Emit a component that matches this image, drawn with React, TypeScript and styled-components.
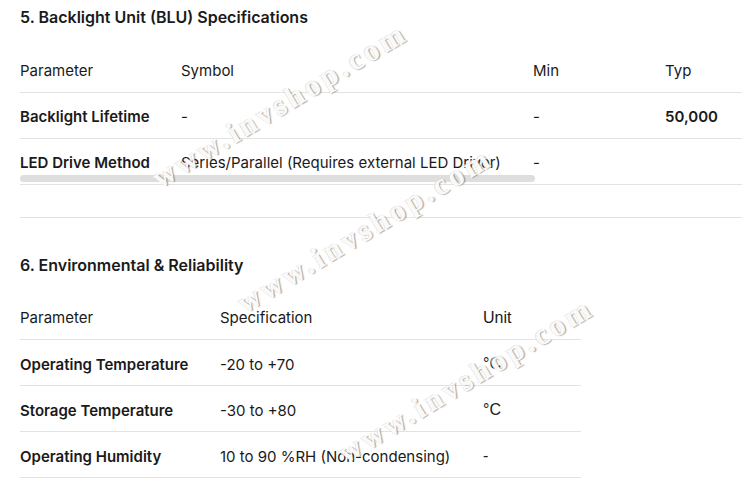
import React from "react";
import styled, { createGlobalStyle } from "styled-components";

const GlobalStyle = createGlobalStyle`
  html, body {
    margin: 0;
    padding: 0;
    background: #ffffff;
    overflow: hidden;
  }
  body {
    font-family: Inter, "Noto Sans", sans-serif;
    color: #1a1a1a;
    -webkit-font-smoothing: antialiased;
  }
`;

const Page = styled.div`
  position: relative;
  width: 742px;
  height: 488px;
  padding: 5px 0 0 20px;
  box-sizing: border-box;
  overflow: hidden;
`;

const Section = styled.section`
  display: flex;
  flex-direction: column;
`;

const Heading = styled.h3`
  margin: 0 0 17px;
  font-size: 16px;
  line-height: 24px;
  font-weight: 600;
  color: #1a1a1a;
`;

const TableWrap = styled.div`
  position: relative;
  width: 722px;
  overflow: hidden;
`;

const ScrollThumb = styled.div`
  position: absolute;
  left: 0;
  bottom: 3px;
  width: 515px;
  height: 7px;
  border-radius: 4px;
  background: #dedede;
`;

const Table = styled.table<{ $width: number }>`
  width: ${(p) => p.$width}px;
  border-collapse: collapse;
  table-layout: fixed;
  font-size: 15px;
`;

const Row = styled.tr`
  height: 46px;
  border-bottom: 1px solid #e3e3e3;
`;

const HeadCell = styled.th<{ $arial?: boolean }>`
  padding: 3px 0 0;
  text-align: left;
  font-weight: 400;
  vertical-align: middle;
  white-space: nowrap;
  font-family: ${(p) =>
    p.$arial ? '"Liberation Sans", Arial, sans-serif' : "Inter, sans-serif"};
  font-size: ${(p) => (p.$arial ? "16px" : "15px")};
`;

const Cell = styled.td<{ $bold?: boolean; $arial?: boolean }>`
  padding: 3px 0 0;
  vertical-align: middle;
  white-space: nowrap;
  font-weight: ${(p) => (p.$bold ? 600 : 400)};
  font-family: ${(p) =>
    p.$arial ? '"Liberation Sans", Arial, sans-serif' : "Inter, sans-serif"};
  font-size: ${(p) => (p.$arial ? "16px" : "15px")};
`;

const Divider = styled.hr`
  width: 722px;
  margin: 32px 0 35px;
  border: none;
  border-top: 1px solid #e3e3e3;
  height: 0;
`;

const Watermark = styled.span`
  position: absolute;
  transform: translate(-50%, -50%) rotate(-31deg);
  font-family: "Liberation Serif", "Times New Roman", serif;
  font-weight: 700;
  font-size: 30px;
  letter-spacing: 4px;
  white-space: nowrap;
  color: rgba(255, 255, 255, 0.95);
  text-shadow: 1px 1px 1px rgba(90, 90, 90, 0.5),
    -1px -1px 0 rgba(225, 225, 225, 0.7);
  pointer-events: none;
  z-index: 2;
`;

const bluCols = [161, 352, 132, 132, 132, 91];
const bluHead = ["Parameter", "Symbol", "Min", "Typ", "Max", "Unit"];
const bluRows = [
  ["Backlight Lifetime", "-", "-", "50,000", "-", "Hours"],
  ["LED Drive Method", "Series/Parallel (Requires external LED Driver)", "-", "", "", ""],
];

const envCols = [200, 263, 98];
const envHead = ["Parameter", "Specification", "Unit"];
const envRows = [
  ["Operating Temperature", "-20 to +70", "°C"],
  ["Storage Temperature", "-30 to +80", "°C"],
  ["Operating Humidity", "10 to 90 %RH (Non-condensing)", "-"],
];

const sum = (a: number[]) => a.reduce((x, y) => x + y, 0);

export default function App() {
  return (
    <>
      <GlobalStyle />
      <Page>
        <Section>
          <Heading>5. Backlight Unit (BLU) Specifications</Heading>
          <TableWrap>
            <Table $width={sum(bluCols)}>
              <colgroup>
                {bluCols.map((w, i) => (
                  <col key={i} style={{ width: w }} />
                ))}
              </colgroup>
              <thead>
                <Row>
                  {bluHead.map((h) => (
                    <HeadCell key={h}>{h}</HeadCell>
                  ))}
                </Row>
              </thead>
              <tbody>
                {bluRows.map((r, ri) => (
                  <Row key={ri}>
                    {r.map((c, ci) => (
                      <Cell key={ci} $bold={ci === 0 || ci === 3}>
                        {c}
                      </Cell>
                    ))}
                  </Row>
                ))}
              </tbody>
            </Table>
            <ScrollThumb />
          </TableWrap>
        </Section>

        <Divider />

        <Section>
          <Heading>6. Environmental &amp; Reliability</Heading>
          <Table $width={sum(envCols)}>
            <colgroup>
              {envCols.map((w, i) => (
                <col key={i} style={{ width: w }} />
              ))}
            </colgroup>
            <thead>
              <Row>
                {envHead.map((h, i) => (
                  <HeadCell key={h} $arial={i === 2}>
                    {h}
                  </HeadCell>
                ))}
              </Row>
            </thead>
            <tbody>
              {envRows.map((r, ri) => (
                <Row key={ri}>
                  {r.map((c, ci) => (
                    <Cell key={ci} $bold={ci === 0} $arial={ci === 2}>
                      {c}
                    </Cell>
                  ))}
                </Row>
              ))}
            </tbody>
          </Table>
        </Section>

        <Watermark style={{ left: 280, top: 105 }}>www.invshop.com</Watermark>
        <Watermark style={{ left: 365, top: 230 }}>www.invshop.com</Watermark>
        <Watermark style={{ left: 466, top: 380 }}>www.invshop.com</Watermark>
      </Page>
    </>
  );
}
